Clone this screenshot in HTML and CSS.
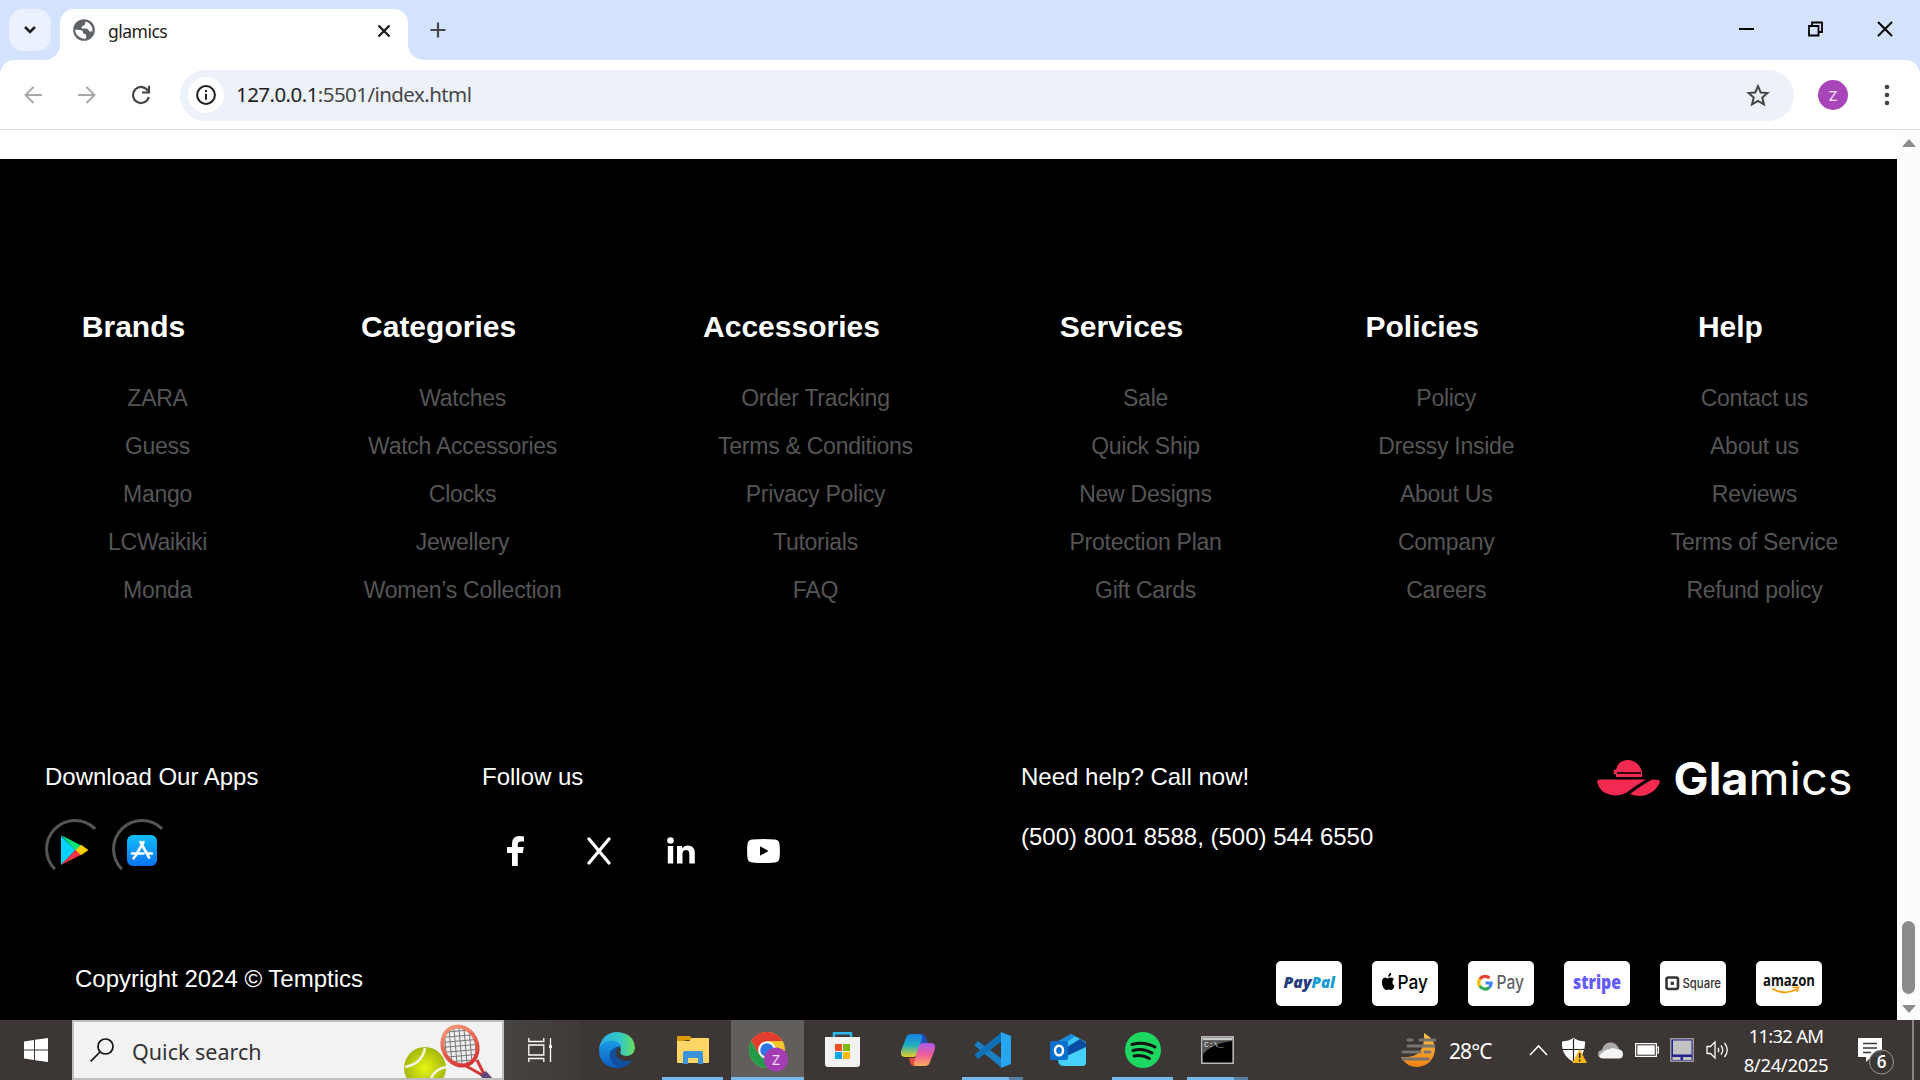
FILE: index.html
```html
<!DOCTYPE html>
<html lang="en">
<head>
<meta charset="utf-8">
<title>glamics</title>
<link rel="stylesheet" href="styles.css">
</head>
<body>
<div class="screen">
  <header class="tabstrip">
    <div class="tab-search"><svg width="14" height="10" viewBox="0 0 14 10"><path d="M2 2l5 5 5-5" fill="none" stroke="#1f1f1f" stroke-width="2.6"/></svg></div>
    <div class="tab">
      <svg class="globe" width="22" height="22" viewBox="0 0 22 22"><circle cx="11" cy="11" r="10.8" fill="#5f6368"/><path d="M2.300 10.500L7 11q3 .2 3 2.500 0 1.500 2.500 1.700 1 .3.500 4.300A9 9 0 0 1 2.300 10.500zM12.500 2.400A9 9 0 0 1 19.500 12Q17.500 13 16 12q-.5-2.500-3-2.500H9q-1-1 .3-2.500 2.700-.3 2.700-2z" fill="#fff"/></svg>
      <span class="tab-title">glamics</span>
      <svg class="tab-close" width="14" height="14" viewBox="0 0 14 14"><path d="M1.500 1.500l11 11m0-11l-11 11" stroke="#1f1f1f" stroke-width="2.400"/></svg>
    </div>
    <svg class="new-tab" width="16" height="16" viewBox="0 0 16 16"><path d="M8 .5v15M.5 8h15" stroke="#474747" stroke-width="2.200"/></svg>
    <div class="window-controls">
      <svg width="15" height="16" viewBox="0 0 15 16"><path d="M0 8h15" stroke="#000" stroke-width="2"/></svg>
      <svg width="15" height="16" viewBox="0 0 15 16"><path d="M1 5h9.500v9.500H1zM4 4.500V1.500h10V11h-3" fill="none" stroke="#000" stroke-width="1.800"/></svg>
      <svg width="16" height="16" viewBox="0 0 16 16"><path d="M1 1l14 14M15 1L1 15" stroke="#000" stroke-width="2"/></svg>
    </div>
  </header>
  <div class="toolbar">
    <svg class="nav-back" width="18" height="18" viewBox="0 0 18 18"><path d="M18 9H2M9.500 1L1.500 9l8 8" fill="none" stroke="#a9a9a9" stroke-width="2"/></svg>
    <svg class="nav-forward" width="18" height="18" viewBox="0 0 18 18"><path d="M0 9h16M8.500 1l8 8-8 8" fill="none" stroke="#a9a9a9" stroke-width="2"/></svg>
    <svg class="nav-reload" width="20" height="20" viewBox="0 0 20 20"><path d="M17 6A8 8 0 1 0 17.800 12" fill="none" stroke="#444" stroke-width="2.200"/><path d="M18 .8V7.500h-7" fill="none" stroke="#444" stroke-width="2.200"/></svg>
    <div class="omnibox">
      <div class="site-info"><svg width="20" height="20" viewBox="0 0 20 20"><circle cx="10" cy="10" r="8.900" fill="none" stroke="#1f1f1f" stroke-width="2"/><path d="M10 8.800v6M10 5v2" stroke="#1f1f1f" stroke-width="2"/></svg></div>
      <span class="url"><b>127.0.0.1</b>:5501/index.html</span>
      <svg class="star" width="24" height="22" viewBox="0 0 24 22"><path d="M12 2.200l2.700 6.300 6.700.6-5.100 4.500 1.600 6.700L12 16.800l-5.900 3.500 1.600-6.700-5.100-4.500 6.700-.6z" fill="none" stroke="#444" stroke-width="2"/></svg>
    </div>
    <div class="avatar">Z</div>
    <svg class="menu-dots" width="6" height="22" viewBox="0 0 6 22"><g fill="#444"><circle cx="3" cy="3" r="2.300"/><circle cx="3" cy="11" r="2.300"/><circle cx="3" cy="19" r="2.300"/></g></svg>
  </div>

  <div class="viewport">
    <main class="page">
      <section class="links">
        <div class="col"><h4>Brands</h4><ul><li>ZARA</li><li>Guess</li><li>Mango</li><li>LCWaikiki</li><li>Monda</li></ul></div>
        <div class="col"><h4>Categories</h4><ul><li>Watches</li><li>Watch Accessories</li><li>Clocks</li><li>Jewellery</li><li>Women’s Collection</li></ul></div>
        <div class="col"><h4>Accessories</h4><ul><li>Order Tracking</li><li>Terms &amp; Conditions</li><li>Privacy Policy</li><li>Tutorials</li><li>FAQ</li></ul></div>
        <div class="col"><h4>Services</h4><ul><li>Sale</li><li>Quick Ship</li><li>New Designs</li><li>Protection Plan</li><li>Gift Cards</li></ul></div>
        <div class="col"><h4>Policies</h4><ul><li>Policy</li><li>Dressy Inside</li><li>About Us</li><li>Company</li><li>Careers</li></ul></div>
        <div class="col"><h4>Help</h4><ul><li>Contact us</li><li>About us</li><li>Reviews</li><li>Terms of Service</li><li>Refund policy</li></ul></div>
      </section>
      <section class="contact">
        <div>
          <p>Download Our Apps</p>
          <div class="apps">
            <div class="app"><svg width="30" height="30" viewBox="0 0 30 30"><path d="M1 1v29L15.500 15z" fill="#00d3ff"/><path d="M1 0l21 11-6 5z" fill="#00e676"/><path d="M1 30l15-15.500 5.500 5z" fill="#ff3545"/><path d="M21 9.800L28.500 15 21 20.200 15.500 15z" fill="#ffce00"/></svg></div>
            <div class="app"><svg width="30" height="31" viewBox="0 0 30 31"><defs><linearGradient id="as" x2="0" y2="1"><stop stop-color="#12bdfb"/><stop offset="1" stop-color="#0873f3"/></linearGradient></defs><rect width="30" height="31" rx="6" fill="url(#as)"/><path d="M16.500 7L8.800 20.500M13.500 7l8.500 15.500M5 18.500h11.500m4 0H25M7.500 22l-1 1.500" fill="none" stroke="#fff" stroke-width="2.600" stroke-linecap="round"/></svg></div>
          </div>
        </div>
        <div>
          <p>Follow us</p>
          <div class="social">
            <svg width="18" height="30" viewBox="0 0 18 30"><path d="M5 30V17H0v-6h5V7.500Q5 0 12.500 0 15 0 17 .5v5h-3q-3.200 0-3.200 3V11h6l-1 6h-5v13z" fill="#fff"/></svg>
            <svg width="24" height="28" viewBox="0 0 24 28"><path d="M2 2l20 24M22 2L2 26" stroke="#fff" stroke-width="3.300" stroke-linecap="round"/></svg>
            <svg class="linkedin" width="28" height="27" viewBox="0 0 28 27"><g fill="#fff"><circle cx="3.500" cy="3.500" r="3.300"/><path d="M.8 9h5.400v17.500H.8zM10 9h5.200v2.500Q17 8.500 20.800 8.500 27.800 8.500 27.800 16v10.500h-5.500V17q0-4-3.200-4-3.600 0-3.600 4v9.500H10z"/></g></svg>
            <svg width="33" height="24" viewBox="0 0 33 24"><path d="M5 .5Q16.500-.5 28 .5q4 .3 4.500 4.500.8 7 0 14-.5 4.200-4.500 4.500-11.500 1-23 0Q1 23.200.5 19q-.8-7 0-14Q1 .8 5 .5z" fill="#fff"/><path d="M13 7.200v9.600L21.500 12z" fill="#000"/></svg>
          </div>
        </div>
        <div>
          <p>Need help? Call now!</p>
          <p class="phone">(500) 8001 8588, (500) 544 6550</p>
        </div>
        <svg class="logo" width="258" height="50" viewBox="0 0 258 50">
          <g fill="#f22a52"><path d="M2 19.500h47Q38 26 29 33q-7 3.500-15 2Q3 33 .2 22.500-.2 20 2 19.500z"/><path d="M33 34Q45 25 55 19.600l6 .1q2.500.6 1.500 3.800Q56 35 44 36q-6 .2-11-2z"/><path d="M19 17v-2.600l-3-.6 1.300-2L16 10l3-.2Q21 0 31.500 0 42 1 45 12v5z"/></g><path d="M20 13h24" stroke="#000" stroke-width="1.600"/>
          <text class="logo-bold" x="76.500" y="35" textLength="75" lengthAdjust="spacingAndGlyphs">Gla</text>
          <text class="logo-light" x="151.500" y="35" textLength="104" lengthAdjust="spacingAndGlyphs">mics</text>
        </svg>
      </section>
      <section class="bottom">
        <span>Copyright 2024 © Temptics</span>
        <div class="cards">
          <svg class="card" viewBox="0 0 66 45"><text class="pp" x="7.500" y="26.500" textLength="28" lengthAdjust="spacingAndGlyphs" fill="#253b80">Pay</text><text class="pp" x="35.500" y="26.500" textLength="23.500" lengthAdjust="spacingAndGlyphs" fill="#179bd7">Pal</text></svg>
          <svg class="card" viewBox="0 0 66 45"><path d="M16 18.500q3-2 6 .5-3.500 3.500.5 7Q21 30.500 18.500 30q-2-1-4 0-2.500 0-4.300-5Q9 18 13 17.500zm.2-1.500q-.2-3.500 3-4.200.2 3.500-3 4.200z" transform="translate(0 -1)"/><text class="pay" x="25.500" y="28" textLength="30.500" lengthAdjust="spacingAndGlyphs">Pay</text></svg>
          <svg class="card" viewBox="0 0 66 45"><g fill="none" stroke-width="3.200"><path d="M21.500 17.200A6.300 6.300 0 0 0 11.800 18" stroke="#ea4335"/><path d="M11.800 18a6.300 7 0 0 0 0 7.500" stroke="#fbbc04"/><path d="M11.800 25a6.300 6.500 0 0 0 9.400 1.500" stroke="#34a853"/><path d="M21.200 26.500q2-1.800 2-4.500H17.500" stroke="#4285f4"/></g><text class="pay" x="28.500" y="28" textLength="27.500" lengthAdjust="spacingAndGlyphs" fill="#5f6368">Pay</text></svg>
          <svg class="card" viewBox="0 0 66 45"><text class="stripe" x="9" y="27.800" textLength="48" lengthAdjust="spacingAndGlyphs">stripe</text></svg>
          <svg class="card" viewBox="0 0 66 45"><rect x="6.500" y="16.500" width="11.500" height="11.500" rx="2" fill="none" stroke="#333" stroke-width="2.600"/><rect x="10.700" y="20.700" width="3.200" height="3.200" fill="#333"/><text class="square" x="22.500" y="26.800" textLength="38.500" lengthAdjust="spacingAndGlyphs">Square</text></svg>
          <svg class="card" viewBox="0 0 66 45"><text class="amazon" x="7" y="25" textLength="52" lengthAdjust="spacingAndGlyphs">amazon</text><path d="M16 27.500q12 7.500 25.500.5" fill="none" stroke="#f90" stroke-width="1.800"/><path d="M36.500 26.500l6-.5-1.500 5" fill="none" stroke="#f90" stroke-width="1.500"/></svg>
        </div>
      </section>
    </main>
    <div class="scrollbar"><i class="up"></i><span class="thumb"></span><i class="down"></i></div>
  </div>

  <footer class="taskbar">
    <div class="start"><svg width="24" height="24" viewBox="0 0 24 24"><path d="M0 3.400l10-1.400v9.500H0zM11 1.800L24 0v11.500H11zM0 12.500h10V22L0 20.600zM11 12.500h13V24l-13-1.800z" fill="#fff"/></svg></div>
    <div class="search">
      <svg width="24" height="24" viewBox="0 0 24 24"><circle cx="15.500" cy="8.500" r="7.500" fill="none" stroke="#111" stroke-width="1.700"/><path d="M10 14L.7 23.300" stroke="#111" stroke-width="1.700"/></svg>
      <span>Quick search</span>
      <svg class="tennis" width="94" height="56" viewBox="402 1022 94 56">
        <defs><radialGradient id="ball"><stop stop-color="#e8f516"/><stop offset="1" stop-color="#a3b808"/></radialGradient><linearGradient id="rk" x2="0" y2="1"><stop stop-color="#f09070"/><stop offset="1" stop-color="#d93434"/></linearGradient><pattern id="net" width="5" height="5" patternUnits="userSpaceOnUse" patternTransform="rotate(20)"><rect width="5" height="5" fill="#eee"/><path d="M0 0h5M0 0v5" stroke="#777" stroke-width="2"/></pattern></defs>
        <path d="M466 1066l18 10M477 1060l8 16" stroke="#d93838" stroke-width="3"/><path d="M480 1075l6-4 8 9h-10z" fill="#604777"/>
        <ellipse cx="460" cy="1046" rx="17" ry="20" transform="rotate(-25 460 1046)" fill="url(#net)" stroke="url(#rk)" stroke-width="4"/>
        <circle cx="425" cy="1068" r="21" fill="url(#ball)"/><path d="M405 1067q17-3 20-19M431 1088q-3-17 15-21" fill="none" stroke="#f4f4e8" stroke-width="2.500"/>
      </svg>
    </div>
    <div class="taskview"><svg width="24" height="24" viewBox="0 0 24 24"><path d="M.8 0v3.500h15V0M.8 24v-3.500h15V24M.8 7h15v10h-15zM22.500 0v24" fill="none" stroke="#fff" stroke-width="1.300"/><path d="M21 7h3v3h-3z" fill="#fff"/></svg></div>
    <nav class="apps-bar">
      <div class="task"><svg width="36" height="36" viewBox="0 0 36 36"><defs><linearGradient id="e1"><stop stop-color="#2aa8e8"/><stop offset=".6" stop-color="#35c9c4"/><stop offset="1" stop-color="#68e05a"/></linearGradient><linearGradient id="e2" x2="0" y2="1"><stop stop-color="#1c9be6"/><stop offset="1" stop-color="#0a5cc0"/></linearGradient></defs><path d="M0 18C1 6 9 0 18 0q17 1 18 16-1 8-9 8-8-1-5-6 0-8-10-9Q5 10 0 18z" fill="url(#e1)"/><path d="M0 19Q2 9 12 8.500q8 0 10.500 6Q14 14 14 21q1 8 9 10 6 1 10-3Q28 36 18 36 1 35 0 19z" fill="url(#e2)"/><path d="M21 14.500Q10 16 10.500 24q1 8 10 12 9-1 12.500-8-5 2-10 0-6-2-6-7 0-4 4-6.500z" fill="#124f9a"/></svg></div>
      <div class="task open"><svg width="32" height="28" viewBox="0 0 32 28"><path d="M0 1q0-1 1-1h12l3 4h-5L0 6z" fill="#dd9b04"/><path d="M0 5h12l3-3h16q1 0 1 1v23q0 1-1 1H1q-1 0-1-1z" fill="#fdd667"/><path d="M6 28V17q0-2 2-2h16q2 0 2 2v11h-5v-6H11v6z" fill="#3b91dc"/></svg></div>
      <div class="task open active"><svg width="40" height="40" viewBox="0 0 40 40"><circle cx="18" cy="18" r="18" fill="#f6c62d"/><path d="M2.400 9A18 18 0 0 1 33.600 9H18l-8 13.500z" fill="#e33b2e"/><path d="M2.400 9A18 18 0 0 0 18 36l8-13.500H10z" fill="#239a48"/><circle cx="18" cy="18" r="8.800" fill="#fff"/><circle cx="18" cy="18" r="6.800" fill="#2c77e8"/><circle cx="27" cy="27.500" r="12" fill="#a43db4"/><text class="badge-z" x="27" y="32.500">Z</text></svg></div>
      <div class="task"><svg width="35" height="35" viewBox="0 0 35 35"><path d="M9 8V1.200h17V8" fill="none" stroke="#2fb8ee" stroke-width="2.500"/><path d="M0 5h35v27q0 3-3 3H3q-3 0-3-3z" fill="#f2f2f2"/><path d="M10 12h7v7h-7z" fill="#f25022"/><path d="M18 12h7v7h-7z" fill="#7fba00"/><path d="M10 20h7v7h-7z" fill="#00a4ef"/><path d="M18 20h7v7h-7z" fill="#ffb900"/></svg></div>
      <div class="task"><svg width="34" height="40" viewBox="0 -1 34 40"><defs><linearGradient id="c1" x2="0" y2="1"><stop stop-color="#1680e5"/><stop offset=".5" stop-color="#21b0bd"/><stop offset="1" stop-color="#eccd22"/></linearGradient><linearGradient id="c2" x2="0" y2="1"><stop stop-color="#a95bea"/><stop offset=".5" stop-color="#ef5c9a"/><stop offset="1" stop-color="#ffac5a"/></linearGradient></defs><g transform="translate(0 3)"><path d="M16 0h5q3 0 4 4l2 6h-8z" fill="#1b4fc0"/><path d="M5 4Q6 0 10 0h9q3 0 2 4l-5 16q-1 3-4 3H4q-5 0-4-6z" fill="url(#c1)"/><path d="M18 32h-5q-3 0-4-4l-1-4h7z" fill="#e8493f"/><path d="M29 28q-1 4-5 4h-9q-3 0-2-4l5-16q1-3 4-3h8q5 0 4 6z" fill="url(#c2)"/></g></svg></div>
      <div class="task open grouped"><svg width="36" height="36" viewBox="0 0 36 36"><path d="M0 12l3-3 24 18v9L0 14z" fill="#1b7fc4"/><path d="M0 24l3 3L27 9V0L0 22z" fill="#0f70b5"/><path d="M26 0l10 4v28l-10 4z" fill="#29a6f2"/></svg></div>
      <div class="task"><svg width="36" height="32" viewBox="0 0 36 32"><path d="M8 8L21 0l15 8v20q0 4-4 4H14q-6 0-6-6z" fill="#37c6f4"/><path d="M8 7L21 0l4 2L11 13z" fill="#1b8bdc"/><path d="M14 15L30 5l6 4v4L20 24z" fill="#0a4ba3"/><path d="M8 26l28-13v15q0 4-4 4H14z" fill="#46d1fa"/><rect y="7" width="18" height="19" rx="2" fill="#0a6fce"/><ellipse cx="9" cy="16.500" rx="4" ry="4.800" fill="none" stroke="#fff" stroke-width="2.500"/></svg></div>
      <div class="task open"><svg width="36" height="36" viewBox="0 0 36 36"><circle cx="18" cy="18" r="18" fill="#1ed760"/><path d="M7 12.500q12-3.500 23 2.500M8 18.500q10-3 19 2.500M9 24q8-2 15.500 2.500" fill="none" stroke="#111" stroke-width="3" stroke-linecap="round"/></svg></div>
      <div class="task open grouped"><svg width="33" height="28" viewBox="0 0 33 28"><path d="M.8.8h31.400v26.400H.8z" fill="#000" stroke="#b8b8b8" stroke-width="1.600"/><path d="M1.500 1.500h30v3h-30z" fill="#ccc"/><path d="M2 5h29Q12 7 2 18z" fill="#555"/><text class="cmd" x="3" y="11">C:\_</text></svg></div>
    </nav>
    <div class="tray">
      <svg class="weather" width="38" height="36" viewBox="0 0 38 36"><defs><linearGradient id="m" x2="0" y2="1"><stop stop-color="#f7c344"/><stop offset="1" stop-color="#f18315"/></linearGradient></defs><path d="M24 1Q36 8 35 18q-2 15-17 17Q6 35 1 25 26 27 24 1z" fill="url(#m)"/><path d="M8 8h4m8 0h15M8 14h26M3 20h17m5 0h5M3 27h25" stroke="#77736f" stroke-width="3" stroke-linecap="round"/></svg>
      <span class="temp">28°C</span>
      <svg class="chev" width="19" height="12" viewBox="0 0 19 12"><path d="M1 11l8.500-9L18 11" fill="none" stroke="#fff" stroke-width="1.600"/></svg>
      <svg class="shield" width="25" height="25" viewBox="0 0 25 25"><path d="M11.500 0Q16 3 23 3.500 24 18 11.500 24-1 18 0 3.500 7 3 11.500 0z" fill="#fff"/><path d="M11.500 1v22M0 11.500h23" stroke="#222" stroke-width="1.200"/><path d="M17.500 11L25 25H10.500z" fill="#fbb813"/><path d="M17.700 15v5m0 1.500v2" stroke="#222" stroke-width="1.500"/></svg>
      <svg class="cloud" width="25" height="17" viewBox="0 0 25 17"><path d="M4 8Q6 0 13 .5q6 .5 8 6.500L10 16H5q-5 0-5-4 0-3.500 4-4z" fill="#aaa"/><path d="M1 14Q7 7 12 7q3-2 6 0 7 0 7 5t-5 4.500H5q-3 0-4-2.500z" fill="#f4f4f4"/></svg>
      <svg class="battery" width="24" height="14" viewBox="0 0 24 14"><path d="M.6.6h20.800v12.800H.6zM22 4h1.400v6H22" fill="none" stroke="#fff" stroke-width="1.200"/><path d="M2.300 2.300h17.500v9.400H2.300z" fill="#fff"/></svg>
      <svg class="touch" width="24" height="24" viewBox="0 0 24 24"><path d="M0 0h24v24H0z" fill="#9a9a9a"/><path d="M1.500 1.500h21v21h-21z" fill="#23238e"/><path d="M3 2.500h18.500v14H3zM2.500 19h8v3h-8zM13 19h8.500v3H13z" fill="#c3c3c3"/></svg>
      <svg class="speaker" width="23" height="20" viewBox="0 0 23 20"><path d="M1 6.500h3.500L9 2v16l-4.500-4.500H1zM12 8q1.500 2 0 4M15 5.500q3.500 4.500 0 9M18.500 3q5.500 7 0 14" fill="none" stroke="#fff" stroke-width="1.300"/></svg>
      <div class="clock"><span>11:32 AM</span><span class="date">8/24/2025</span></div>
      <svg class="notes" width="37" height="38" viewBox="0 0 37 38"><path d="M0 0h24v19H13l-5 5v-5H0z" fill="#fff"/><path d="M5 5.500h14M5 10h14M5 14.500h8" stroke="#3c3634" stroke-width="1.300"/><circle cx="23.500" cy="24" r="12" fill="#393635" fill-opacity=".93" stroke="#999" stroke-width="1"/><text class="count" x="23.500" y="30">6</text></svg>
      <span class="peek"></span>
    </div>
  </footer>
</div>
</body>
</html>
```
FILE: styles.css
```css
* { box-sizing: border-box; }
body { margin: 0; overflow: hidden; }
svg { display: block; flex: none; }
p, h4, ul { margin: 0; padding: 0; }
ul { list-style: none; }

.screen { width: 1920px; height: 1080px; display: flex; flex-direction: column; background: #fff; font-family: "Liberation Sans", Arial, sans-serif; }

/* tab strip */
.tabstrip { height: 60px; flex: none; display: flex; background: #d3e2fd; padding: 9px 20px 0 9px; font-family: "Noto Sans", sans-serif; }
.tab-search { width: 42px; height: 42px; border-radius: 14px; background: #ebf1fe; display: flex; align-items: center; justify-content: center; }
.tab { position: relative; width: 348px; height: 51px; margin-left: 9px; padding: 0 17px 8px 13px; background: #fff; border-radius: 14px 14px 0 0; display: flex; align-items: center; }
.tab::before, .tab::after { content: ""; position: absolute; bottom: 0; width: 15px; height: 15px; }
.tab::before { left: -15px; background: radial-gradient(circle at 0 0, transparent 14.500px, #fff 15px); }
.tab::after { right: -15px; background: radial-gradient(circle at 100% 0, transparent 14.500px, #fff 15px); }
.globe { margin-top: -1px; }
.tab-title { margin-left: 13px; font-size: 17.500px; letter-spacing: -.5px; color: #1f1f1f; padding-top: 1px; }
.tab-close { margin-left: auto; }
.new-tab { margin: 13px 0 0 22px; }
.window-controls { margin: 12px 7px 0 auto; display: flex; gap: 54px; }

/* toolbar */
.toolbar { height: 70px; flex: none; display: flex; align-items: center; padding: 1px 30px 0 24px; border-bottom: 1px solid #dcdee2; background: radial-gradient(circle at 14px 14px, #fff 13.500px, #d3e2fd 14px) 0 0 / 14px 14px no-repeat, radial-gradient(circle at 0 14px, #fff 13.500px, #d3e2fd 14px) 100% 0 / 14px 14px no-repeat, #fff; font-family: "Noto Sans", sans-serif; }
.nav-forward { margin-left: 36px; }
.nav-reload { margin-left: 35px; }
.omnibox { flex: 1; height: 51px; margin-left: 29px; border-radius: 26px; background: #ecf1fa; display: flex; align-items: center; padding: 0 24px 0 8px; }
.site-info { width: 36px; height: 36px; border-radius: 50%; background: #fff; display: flex; align-items: center; justify-content: center; }
.url { margin-left: 12px; font-size: 20.500px; color: #474747; letter-spacing: -.56px; padding-bottom: 2px; }
.url b { font-weight: 400; color: #1f1f1f; }
.star { margin-left: auto; }
.avatar { width: 30px; height: 30px; margin-left: 24px; border-radius: 50%; background: #a846b9; color: #f5e6f7; font-size: 15px; line-height: 30px; text-align: center; }
.menu-dots { margin-left: 36px; }

/* page */
.viewport { flex: 1; display: flex; min-height: 0; }
.page { flex: 1; min-width: 0; margin-top: 29px; background: #000; color: #fff; font-size: 24px; padding: 146px 44px 0 45px; display: flex; flex-direction: column; }
.links { display: flex; justify-content: space-between; padding: 0 15px 0 63px; height: 449px; }
.col h4 { font-size: 30px; line-height: 42px; text-align: center; white-space: nowrap; margin: 0 -76px 48px -124px; padding-top: 1px; }
.col ul { margin-top: -22px; }
.col li { font-size: 23px; line-height: 48px; letter-spacing: -.26px; color: #555; text-align: center; white-space: nowrap; }
.contact { height: 202px; display: grid; grid-template-columns: 437px 539px 576px 256px; }
.contact p { line-height: 28px; padding-top: 9px; }
.contact .phone { padding-top: 32px; }
.apps { display: flex; gap: 7px; margin-top: 28px; }
.app { width: 60px; height: 60px; padding-top: 2px; border: 3px solid transparent; border-top-color: #555; border-left-color: #555; border-radius: 50%; display: flex; align-items: center; justify-content: center; }
.social { display: grid; grid-template-columns: repeat(4, 82.500px); justify-items: center; align-items: center; height: 60px; margin: 30px 0 0 -7px; }
.linkedin { margin-bottom: 2px; }
.logo { margin-top: 6px; overflow: visible; }
.logo-bold, .logo-light { font-family: Inter, sans-serif; font-size: 45px; fill: #fff; }
.logo-bold { font-weight: 700; }
.logo-light { font-weight: 400; }
.bottom { display: flex; justify-content: space-between; padding: 5px 31px 0 30px; line-height: 36px; }
.cards { display: flex; gap: 30px; }
.card { width: 66px; height: 45px; background: #fff; border-radius: 5px; overflow: visible; }
.pp { font: italic 800 16.500px "Open Sans", sans-serif; }
.pay { font: 500 19px Inter, sans-serif; }
.stripe { font: 800 19.500px "Open Sans", sans-serif; fill: #635bff; }
.square { font: 500 13px Inter, sans-serif; fill: #333; }
.amazon { font: 700 16.500px "Open Sans", sans-serif; fill: #111; }

.scrollbar { width: 23px; flex: none; background: #fcfcfc; display: flex; flex-direction: column; align-items: center; padding: 9px 0 7px; }
.up, .down { border: 7px solid transparent; border-top-width: 0; border-bottom: 8px solid #8b8b8b; }
.down { transform: rotate(180deg); margin-top: 11px; }
.thumb { width: 13px; height: 73px; border-radius: 7px; background: #8b8b8b; margin-top: auto; }

/* taskbar */
.taskbar { height: 60px; flex: none; display: flex; background: #3c3634; color: #fff; font-family: "Noto Sans", sans-serif; }
.start { width: 72px; display: flex; align-items: center; justify-content: center; }
.search { width: 432px; border: 2px solid #bfbebe; background: #f2f2f2; color: #333; display: flex; align-items: center; padding-left: 16px; font-size: 21.500px; white-space: nowrap; }
.search span { margin-left: 18px; padding-top: 3px; }
.tennis { margin: 0 6px 0 auto; }
.taskview { width: 76px; display: flex; align-items: center; padding-left: 24px; background: linear-gradient(90deg, #474340, #403b38); }
.apps-bar { display: flex; }
.task { position: relative; width: 75px; display: flex; align-items: center; justify-content: center; }
.task svg { margin-top: -1px; }
.task:first-child svg { margin-right: 2px; }
.task.open::after { content: ""; position: absolute; left: 7px; right: 7px; bottom: 0; height: 3px; background: #76b9ed; }
.task.grouped::after { background: linear-gradient(90deg, #76b9ed 47px, #557fa3 47px); }
.task.active::before { content: ""; position: absolute; inset: 0 1px; background: #625e5b; }
.task.active::after { left: 1px; right: 1px; }
.task.active svg { position: relative; margin: 3px 0 0 3px; }
.badge-z { font-size: 14px; fill: #eedff1; text-anchor: middle; }
.cmd { font: 8px "Liberation Mono", monospace; fill: #eee; }
.tray { margin-left: auto; display: flex; align-items: center; }
.temp { font-size: 21px; margin-left: 11px; width: 45px; letter-spacing: -.9px; padding-top: 2px; }
.chev { margin-left: 35px; margin-top: -1px; }
.shield { margin-left: 14px; }
.cloud { margin-left: 11px; }
.battery { margin-left: 12px; }
.touch { margin-left: 11px; }
.speaker { margin-left: 12px; }
.clock { width: 100px; margin-left: 7px; display: flex; flex-direction: column; align-items: center; font-size: 18.500px; line-height: 29px; letter-spacing: -.75px; }
.date { letter-spacing: -.35px; }
.notes { margin-left: 22px; margin-top: 13px; }
.count { font: 600 17px "Noto Sans", sans-serif; fill: #fff; text-anchor: middle; }
.peek { width: 2px; height: 60px; background: #8a8684; margin: 0 6px 0 17px; }
```
